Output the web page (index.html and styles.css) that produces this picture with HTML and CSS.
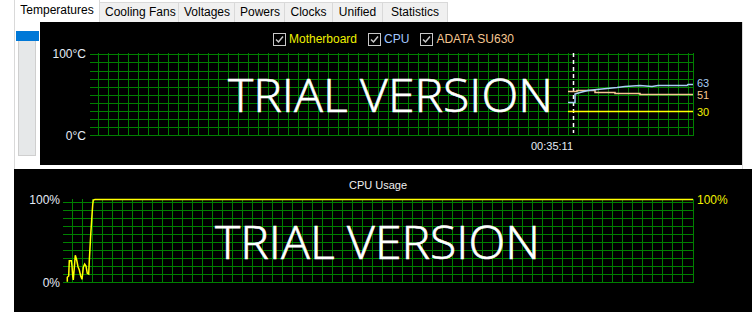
FILE: index.html
```html
<!DOCTYPE html>
<html lang="en">
<head>
  <meta charset="UTF-8">
  <meta name="viewport" content="width=device-width, initial-scale=1.0">
  <title>Sensor Graphs</title>
  <link rel="stylesheet" href="styles.css">
</head>
<body>
  <div class="tabs">
    <div class="tab active">Temperatures</div>
    <div class="tab">Cooling Fans</div>
    <div class="tab">Voltages</div>
    <div class="tab">Powers</div>
    <div class="tab">Clocks</div>
    <div class="tab">Unified</div>
    <div class="tab">Statistics</div>
  </div>

  <div class="top-row">
    <div class="sidebar">
      <div class="sb-thumb"></div>
      <div class="sb-track"></div>
    </div>
    <div class="chart chart-temp">
      <div class="legend">
        <label class="legend-item mb"><span class="check"><svg viewBox="0 0 11 11"><polyline points="2,5.5 4.5,8 9,2.5" /></svg></span>Motherboard</label>
        <label class="legend-item cpu"><span class="check"><svg viewBox="0 0 11 11"><polyline points="2,5.5 4.5,8 9,2.5" /></svg></span>CPU</label>
        <label class="legend-item ssd"><span class="check"><svg viewBox="0 0 11 11"><polyline points="2,5.5 4.5,8 9,2.5" /></svg></span>ADATA SU630</label>
      </div>
      <svg class="plot" width="702" height="143" viewBox="0 0 702 143">
        <defs>
          <pattern id="vgrid-top" patternUnits="userSpaceOnUse" x="58" y="0" width="10" height="143">
            <line x1="0.5" y1="0" x2="0.5" y2="143" class="grid" />
          </pattern>
        </defs>
        <rect x="58" y="31" width="591" height="83" fill="url(#vgrid-top)" />
        <g class="grid">
          <line x1="50" y1="32.5" x2="653" y2="32.5" />
          <line x1="50" y1="40.5" x2="653" y2="40.5" />
          <line x1="50" y1="49.5" x2="653" y2="49.5" />
          <line x1="50" y1="57.5" x2="653" y2="57.5" />
          <line x1="50" y1="65.5" x2="653" y2="65.5" />
          <line x1="50" y1="73.5" x2="653" y2="73.5" />
          <line x1="50" y1="81.5" x2="653" y2="81.5" />
          <line x1="50" y1="89.5" x2="653" y2="89.5" />
          <line x1="50" y1="97.5" x2="653" y2="97.5" />
          <line x1="50" y1="105.5" x2="653" y2="105.5" />
          <line x1="50" y1="113.5" x2="653" y2="113.5" />
          <line x1="653.5" y1="31" x2="653.5" y2="114" />
        </g>
        <text class="watermark" x="350.5" y="90" textLength="325" lengthAdjust="spacingAndGlyphs" text-anchor="middle">TRIAL VERSION</text>
        <line class="cursor" x1="533.5" y1="31" x2="533.5" y2="111" />
        <polyline class="line-yellow" points="528,89.5 653,89.5" />
        <polyline class="line-orange" points="528,69.5 537,69.5 537,68.5 555,68.5 555,70.5 575,70.5 575,71.5 600,71.5 600,72.5 653,72.5" />
        <polyline class="line-blue" points="528,80.5 535,80.5 535,72 540,70.5 548,68.5 557,67.5 567,66.5 577,65.5 585,64.5 600,63.5 612,64.5 618,63.5 647,63.5 648,62.5 653,62.5" />
        <text class="axis" x="46" y="36" text-anchor="end">100°C</text>
        <text class="axis" x="46" y="118" text-anchor="end">0°C</text>
        <text class="axis time" x="491" y="128">00:35:11</text>
        <text class="val val-blue" x="657" y="65">63</text>
        <text class="val val-orange" x="657" y="77">51</text>
        <text class="val val-yellow" x="657" y="94">30</text>
      </svg>
    </div>
  </div>

  <div class="chart chart-cpu">
    <svg class="plot" width="738" height="143" viewBox="0 0 738 143">
      <defs>
        <pattern id="vgrid-cpu" patternUnits="userSpaceOnUse" x="58" y="0" width="10" height="143">
          <line x1="0.5" y1="0" x2="0.5" y2="143" class="grid" />
        </pattern>
        <pattern id="hgrid-cpu" patternUnits="userSpaceOnUse" x="0" y="33" width="738" height="8">
          <line x1="0" y1="0.5" x2="738" y2="0.5" class="grid" />
        </pattern>
      </defs>
      <rect x="49" y="33" width="630" height="81" fill="url(#hgrid-cpu)" />
      <rect x="58" y="30" width="611" height="84" fill="url(#vgrid-cpu)" />
      <line class="grid" x1="679.5" y1="30" x2="679.5" y2="114" />
      <text class="watermark" x="363.5" y="90" textLength="325" lengthAdjust="spacingAndGlyphs" text-anchor="middle">TRIAL VERSION</text>
      <polyline class="line-yellow" points="53.3,112.7 53.3,108.3 54.7,107 55.3,91.7 57.3,91.7 58,97 58.7,107 59.3,111 60.7,93.7 61.3,86.3 62.7,91 64,97.7 65.3,101 66.7,107 68,110.3 69.3,98.3 70.7,95 72,97 73.3,104.3 74.7,105 75.3,91.7 76.7,66 78,46 78.7,36 79.3,31 81,30.5 679,30.5" />
      <text class="title" x="364" y="20" text-anchor="middle">CPU Usage</text>
      <text class="axis" x="46" y="35" text-anchor="end">100%</text>
      <text class="axis" x="46" y="118" text-anchor="end">0%</text>
      <text class="val val-yellow" x="683" y="35">100%</text>
    </svg>
  </div>
</body>
</html>
```

FILE: styles.css
```css
body {
  margin: 0;
  background-color: #fff;
  font-family: 'Liberation Sans', Arial, sans-serif;
  font-size: 12px;
  color: #000;
}
.tabs {
  display: flex;
  align-items: flex-end;
  height: 22px;
  padding-left: 14px;
}
.tab {
  height: 19px;
  line-height: 19px;
  padding: 0 5px;
  background-color: #f0f0f0;
  border: 1px solid #d9d9d9;
  border-left: none;
  border-bottom: none;
  text-align: center;
  white-space: nowrap;
}
.tab.active {
  height: 22px;
  line-height: 20px;
  background-color: #fff;
  border-left: 1px solid #d9d9d9;
  border-top: none;
}
.tab:nth-child(1) { width: 74px; }
.tab:nth-child(2) { width: 68px; }
.tab:nth-child(3) { width: 45px; }
.tab:nth-child(4) { width: 39px; }
.tab:nth-child(5) { width: 37px; }
.tab:nth-child(6) { width: 39px; }
.tab:nth-child(7) { width: 54px; }
.top-row {
  display: flex;
  width: 727px;
  height: 147px;
  margin-left: 14px;
  border-left: 1px solid #d9d9d9;
  border-right: 1px solid #d9d9d9;
}
.sidebar {
  width: 25px;
  display: flex;
  flex-direction: column;
}
.sb-thumb {
  width: 23px;
  height: 10px;
  margin: 9px 0 0 1px;
  background-color: #0078d7;
}
.sb-track {
  width: 16px;
  height: 114px;
  margin-left: 3px;
  background-color: #e6e8e9;
  border: 1px solid #cfcfcf;
  border-top: none;
}
.chart {
  position: relative;
  background-color: #000;
}
.chart-temp {
  width: 702px;
  height: 143px;
}
.chart-cpu {
  width: 738px;
  height: 143px;
  margin-left: 14px;
}
.plot {
  display: block;
  font-family: 'Liberation Sans', Arial, sans-serif;
}
.legend {
  position: absolute;
  top: 11px;
  left: 233px;
  display: flex;
  align-items: center;
  gap: 11px;
  font-size: 12px;
  line-height: 13px;
}
.legend-item {
  display: flex;
  align-items: center;
  gap: 3px;
}
.legend-item.mb { color: #eef000; }
.legend-item.cpu { color: #a3c8ff; }
.legend-item.ssd { color: #f6c792; }
.check {
  width: 11px;
  height: 11px;
  border: 1px solid #c8c8c8;
  background-color: #000;
}
.check svg {
  display: block;
  width: 11px;
  height: 11px;
  fill: none;
  stroke: #c8c8c8;
  stroke-width: 1.3;
}
.grid line,
line.grid {
  stroke: #008000;
  stroke-width: 1;
  shape-rendering: crispEdges;
}
.watermark {
  fill: #fff;
  stroke: #fff;
  stroke-width: 0.6;
  font-family: 'Open Sans', 'Noto Sans', sans-serif;
  font-weight: 300;
  font-size: 46px;
}
.cursor {
  stroke: #fff;
  stroke-width: 1.5;
  stroke-dasharray: 4 3;
}
polyline {
  fill: none;
  stroke-width: 1.5;
}
.line-yellow { stroke: #ffff00; }
.line-orange { stroke: #f6c792; }
.line-blue { stroke: #a9cdf5; }
.axis {
  fill: #e4ecf6;
  font-size: 12px;
}
.axis.time { font-size: 11px; }
.title {
  fill: #f0f0f0;
  font-size: 11px;
}
.val { font-size: 11px; }
.val-blue { fill: #a9cdf5; }
.val-orange { fill: #f6c792; }
.val-yellow { fill: #f0f000; }
.chart-cpu .val { font-size: 12px; }
```
